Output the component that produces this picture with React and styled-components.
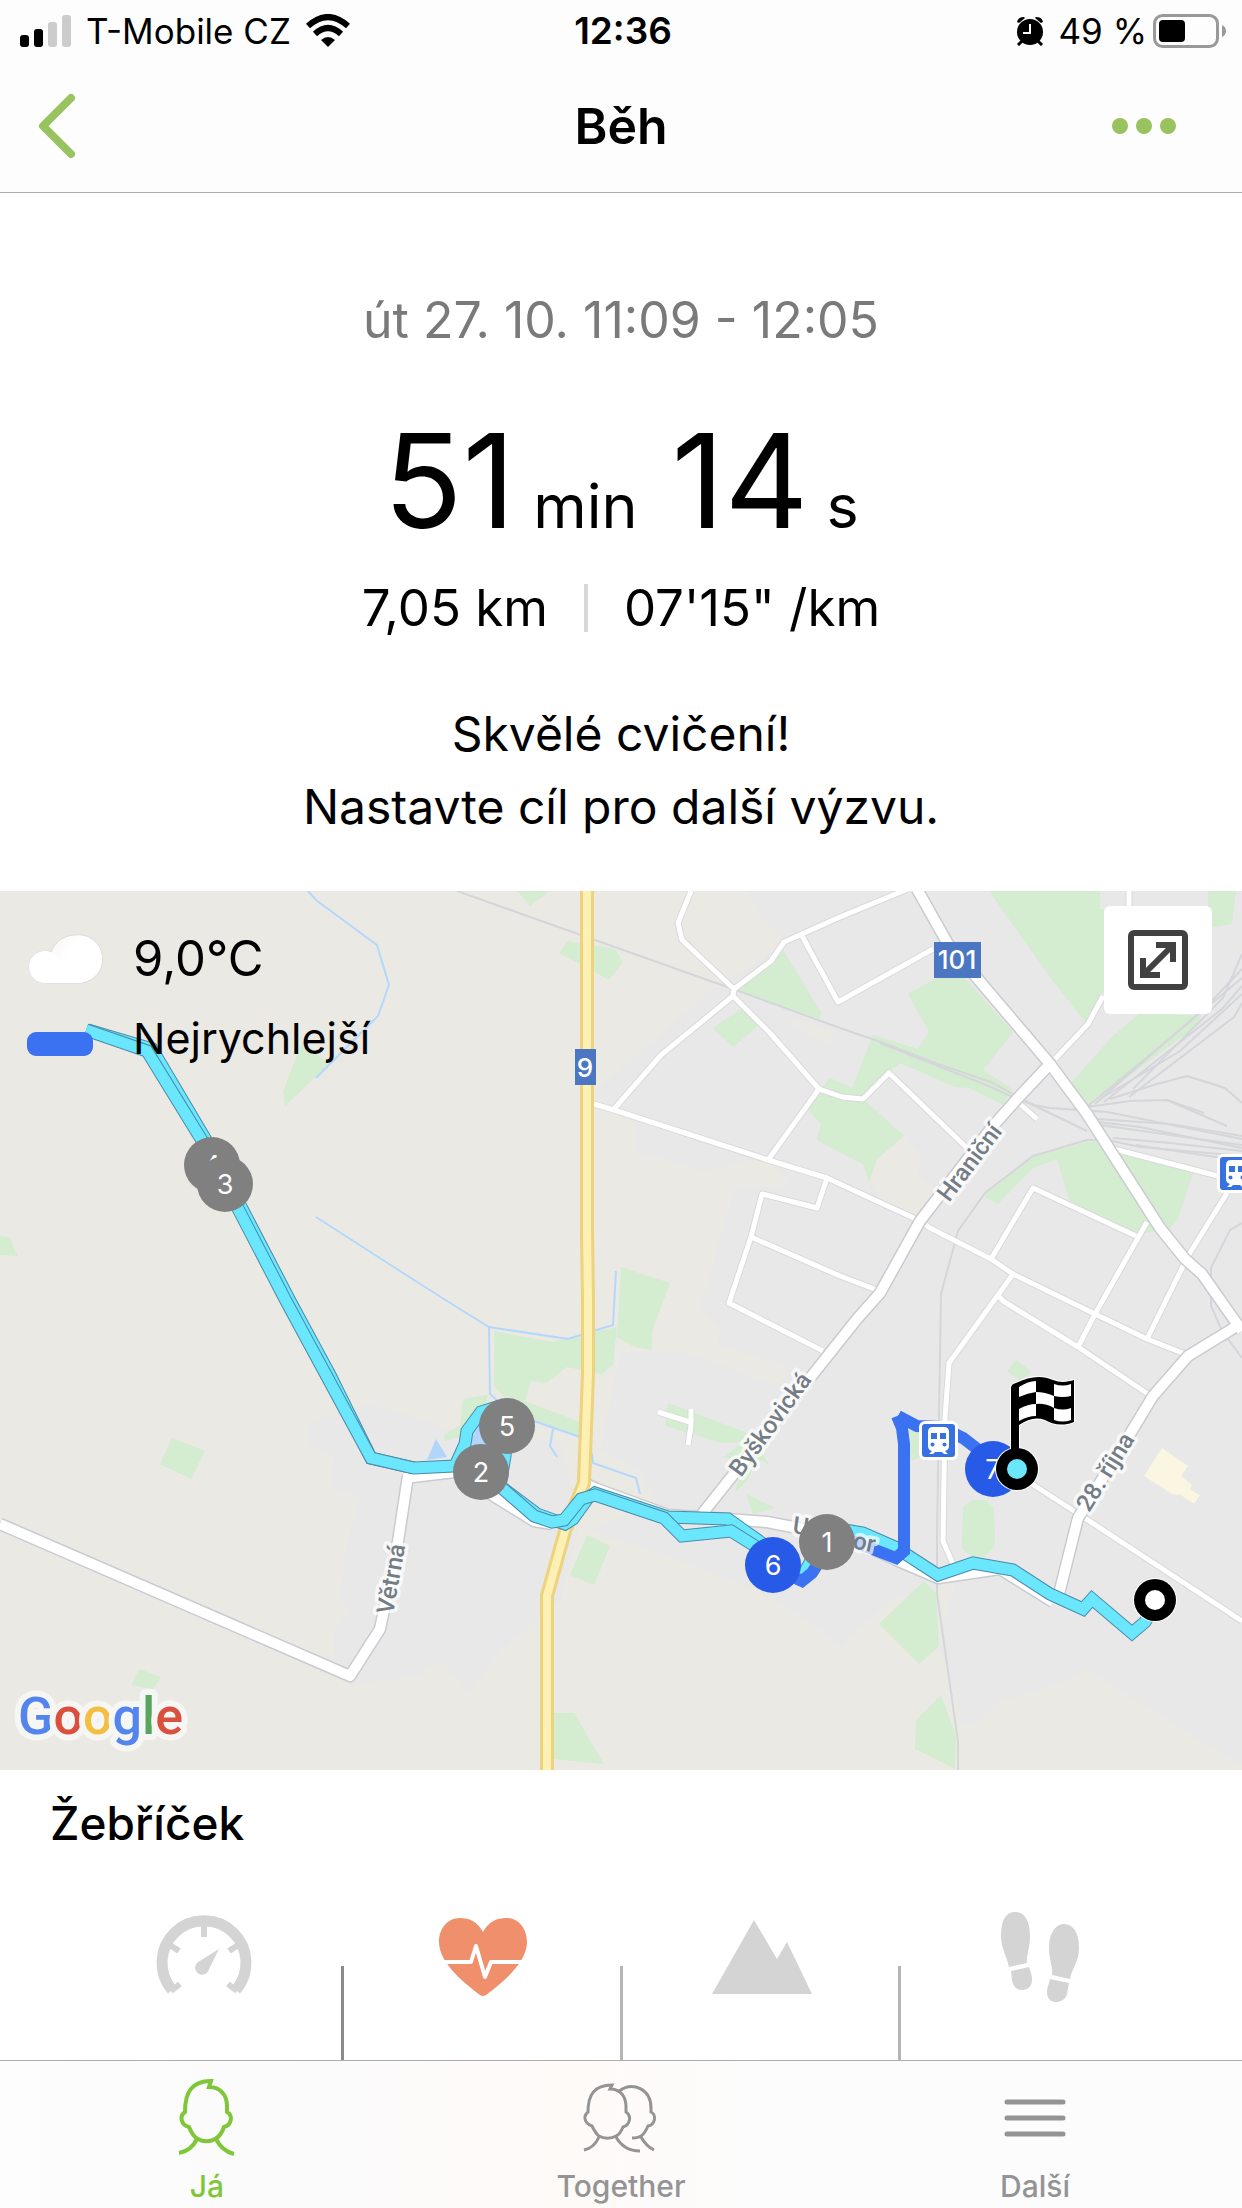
import React, { useState } from 'react';
import styled, { createGlobalStyle } from 'styled-components';

const GlobalStyle = createGlobalStyle`
  * {
    box-sizing: border-box;
  }

  body {
    margin: 0;
    background: #fff;
    color: #000;
    font-family: Inter, 'Liberation Sans', sans-serif;
  }

  button {
    padding: 0;
    border: 0;
    background: none;
    color: inherit;
    font: inherit;
    cursor: pointer;
  }

  svg {
    display: block;
  }
`;

const Screen = styled.div`
  display: flex;
  flex-direction: column;
  min-height: 100vh;
`;

const Top = styled.header`
  background: #fdfdfd;
  border-bottom: 1px solid #aeaeae;
`;

const StatusBar = styled.div`
  display: grid;
  grid-template-columns: 1fr auto 1fr;
  align-items: center;
  height: 64px;
  padding: 0 16px 2px 20px;
  font-size: 35px;
  line-height: 40px;

  .side {
    display: flex;
    align-items: center;
    gap: 14px;
  }

  .right {
    justify-content: flex-end;
  }

  .charge {
    display: flex;
    align-items: center;
    gap: 6px;
  }

  .time {
    font-size: 37px;
    font-weight: 600;
  }
`;

const NavBar = styled.nav`
  display: grid;
  grid-template-columns: 1fr auto 1fr;
  align-items: center;
  height: 128px;
  padding: 0 60px 4px 32px;

  h1 {
    margin: 0;
    padding-left: 28px;
    font-size: 50px;
    line-height: 60px;
    font-weight: 600;
  }
`;

const NavButton = styled.button`
  justify-self: ${(props) => (props.$end ? 'end' : 'start')};
  color: #98c35f;
`;

const Summary = styled.section`
  display: flex;
  flex-direction: column;
  align-items: center;
  padding: 97px 32px 48px;
  text-align: center;
`;

const When = styled.p`
  margin: 0;
  color: #7a7a7a;
  font-size: 50px;
  line-height: 60px;
`;

const Duration = styled.div`
  display: flex;
  align-items: baseline;
  margin-top: 56px;
  font-size: 130px;
  line-height: 150px;

  .unit {
    margin: 0 34px 0 18px;
    font-size: 61px;
  }

  .unit:last-child {
    margin-right: 0;
  }
`;

const Stats = styled.div`
  display: flex;
  align-items: center;
  gap: 36px;
  font-size: 51px;
  line-height: 54px;

  .separator {
    width: 4px;
    height: 48px;
    background: #d8d8d8;
  }
`;

const Cheer = styled.p`
  margin: 62px 0 0;
  font-size: 48px;
  line-height: 73px;
`;

const MapPanel = styled.section`
  position: relative;
  overflow: hidden;

  .map {
    width: 100%;
    height: auto;
  }
`;

const Legend = styled.div`
  position: absolute;
  top: 30px;
  left: 27px;
  display: grid;
  grid-template-columns: 76px auto;
  column-gap: 30px;
  row-gap: 5px;
  align-items: center;

  .temperature {
    font-size: 49px;
    line-height: 76px;
  }

  .label {
    font-size: 43px;
    line-height: 72px;
  }

  .pill {
    width: 66px;
    height: 24px;
    margin-top: 12px;
    border-radius: 9px;
    background: #3b72f2;
  }
`;

const ExpandButton = styled.button`
  position: absolute;
  top: 15px;
  right: 30px;
  display: flex;
  align-items: center;
  justify-content: center;
  width: 108px;
  height: 108px;
  border-radius: 6px;
  background: #fff;
`;

const Board = styled.section`
  flex: 1;
  display: flex;
  flex-direction: column;
  padding-top: 23px;

  h2 {
    margin: 0;
    padding: 0 50px;
    font-size: 46px;
    line-height: 60px;
    font-weight: 500;
  }
`;

const BoardTabs = styled.div`
  flex: 1;
  display: grid;
  grid-template-columns: repeat(4, 1fr);
  padding: 0 62px 0 65px;
  margin-top: 53px;
`;

const BoardTab = styled.button`
  display: flex;
  justify-content: center;
  align-items: flex-start;
  color: ${(props) => (props.$active ? '#ef8f6c' : '#d4d4d4')};
  background: linear-gradient(${(props) => props.$divider}, ${(props) => props.$divider})
    right bottom / 3px calc(100% - 60px) no-repeat;
`;

const TabBar = styled.nav`
  display: grid;
  grid-template-columns: repeat(3, 1fr);
  height: 148px;
  border-top: 1px solid #aeaeae;
  background: linear-gradient(90deg, #fdfdfd, #fbfbfc 20%, #fefaf8 46%, #fcfcfc 62%, #fcfcfc);
`;

const TabLink = styled.a`
  display: flex;
  flex-direction: column;
  align-items: center;
  padding-top: 15px;
  color: ${(props) => (props.$active ? '#7fc738' : '#949494')};
  font-size: 30px;
  line-height: 40px;
  font-weight: 500;
  text-decoration: none;

  span {
    margin-top: 6px;
  }
`;

const GREEN_AREAS = [
  '302,1041 329,1063 285,1105 283,1091',
  '0,1235 9,1236 18,1255 0,1254',
  '517,890 549,890 530,905',
  '559,952 568,940 615,948 623,961 609,979',
  '735,989 783,949 821,1011 820,1018',
  '713,1027 742,1007 759,1024 733,1046',
  '808,1108 821,1088 830,1077 852,1087 873,1034 918,1048 929,1031 908,993 935,978 960,972 1013,1031 983,1069 1012,1088 1003,1104 969,1087 955,1086 900,1062 889,1072 863,1098 904,1135 877,1158 869,1181 863,1163 820,1141 817,1138 821,1123',
  '989,890 1100,890 1100,908 1104,908 1104,990 1086,1022 1053,980',
  '1208,890 1236,890 1232,923 1208,927',
  '1070,1083 1113,1035 1140,1012 1202,1015 1190,1030 1087,1106',
  '983,1195 1033,1155 1087,1141 1107,1140 1115,1147 1193,1172 1178,1217 1169,1229 1135,1233 1070,1202 1057,1158 1033,1167 998,1203',
  '621,1266 670,1282 652,1330 652,1349 635,1346 617,1336 618,1320',
  '494,1330 552,1341 617,1326 613,1363 602,1373 567,1366 546,1382 531,1380 525,1400 580,1421 579,1436 534,1420 515,1405 505,1397 494,1385',
  '463,1398 488,1394 480,1430 445,1440 444,1434 460,1424',
  '668,1402 750,1433 745,1441 722,1442 665,1425',
  '724,1456 750,1436 770,1464 757,1458 747,1480 735,1492 742,1462',
  '746,1493 776,1507 753,1513',
  '587,1534 610,1545 594,1584 570,1574',
  '553,1712 574,1712 604,1763 553,1758',
  '909,1428 920,1430 923,1455 911,1460',
  '963,1506 972,1499 986,1499 994,1507 995,1545 984,1556 972,1556 962,1547',
  '924,1580 936,1592 939,1645 919,1663 879,1623',
  '941,1694 956,1735 955,1768 915,1748 916,1719',
  '1016,1359 1032,1371 1020,1379 1007,1370',
  '172,1437 205,1450 191,1478 160,1463',
  '139,1668 161,1676 153,1688 131,1684',
];

const BUILT_AREAS = [
  '747,890 760,913 787,940 735,975 710,990 600,1087 600,1105 638,1121 635,1150 705,1170 770,1155 790,1185 735,1185 700,1308 720,1325 718,1345 790,1365 780,1385 680,1350 620,1352 600,1450 640,1470 655,1500 590,1530 640,1545 760,1590 815,1625 840,1645 890,1600 955,1582 940,1640 962,1724 977,1724 1000,1700 1060,1683 1085,1668 1242,1765 1242,890',
  '370,1403 420,1418 450,1430 560,1440 580,1520 560,1600 500,1650 470,1692 440,1660 420,1675 350,1683 334,1660 334,1627 350,1610 340,1600 345,1550 360,1497 330,1485 335,1455 310,1445 307,1425 325,1416',
];

const BARE_AREAS = [
  '904,1135 920,1152 918,1172 932,1188 920,1218 885,1200 869,1181 877,1158',
  '783,1016 835,1030 829,1044 805,1032',
];

const STREAMS = [
  '308,890 316,899 377,944 389,984 378,1015 316,1077',
  '316,1216 400,1270 447,1300 489,1326 568,1338 613,1324 616,1270',
  '489,1326 490,1393 500,1402 534,1420 580,1436',
  '553,1428 550,1445 557,1456',
  '592,1452 593,1462 636,1477 640,1493',
];

const RAILS = [
  '457,890 733,988 840,1027 878,1040 938,1063 991,1081 1033,1104 1087,1130',
  '880,1042 991,1086 1015,1097 1034,1104 1050,1107 1107,1111 1242,1138',
  '1087,1106 1187,1023 1242,977',
  '1095,1103 1208,1004 1242,968',
  '1104,1101 1222,1008 1242,985',
  '1100,1098 1180,1050 1242,993',
  '1129,1096 1234,1016 1242,1002',
  '1133,1088 1223,997 1242,953',
  '1110,1098 1157,1083 1187,1075 1225,1087 1242,1102',
  '1087,1106 1130,1100 1167,1099 1227,1125',
  '1167,1099 1204,1112',
  '1097,1118 1170,1123 1242,1135',
  '1097,1121 1140,1126 1242,1147',
  '1100,1124 1220,1141 1242,1144',
  '1107,1139 1140,1146 1242,1155',
  '1113,1137 1170,1142 1242,1150',
  '1136,1144 1242,1160',
  '1107,1139 1087,1139 1033,1155 985,1192 958,1230 941,1293 937,1533 937,1593 958,1740 958,1769',
  '1242,1222 1230,1229 1211,1267 1211,1305 1222,1330 1242,1357',
];

const MINOR_ROADS = [
  '691,890 678,922 682,939 734,988 733,995 770,1032 819,1088 842,1096 863,1098 889,1072 967,1147',
  '734,988 771,960 784,941 840,916 908,888',
  '801,933 838,1001 933,948',
  '733,995 661,1054 614,1108',
  '594,1103 614,1109 768,1159 827,1177 920,1220 930,1227 991,1258 1013,1273 1095,1313 1147,1338 1185,1353',
  '819,1088 768,1159',
  '827,1177 817,1207 762,1193 751,1236 729,1302 823,1350',
  '751,1236 840,1275 877,1289',
  '991,1258 1033,1187 1136,1235',
  '1147,1221 1095,1313 1078,1346',
  '1013,1273 998,1294 949,1362 945,1417 943,1540 953,1563',
  '998,1294 1003,1300 1078,1346 1148,1393',
  '1227,1192 1188,1255 1147,1338',
  '1110,1147 1218,1175',
  '1055,1058 1088,1023 1103,995',
  '1020,1103 1037,1118',
  '1129,890 1129,905',
  '1032,1483 1074,1510 1242,1620',
  '658,1411 690,1421',
  '691,1408 691,1425 688,1444',
];

const MAJOR_ROADS = [
  '917,888 948,943 977,977 1050,1063 1087,1113 1160,1227 1185,1258 1202,1273 1242,1330',
  '1050,1063 1017,1098 993,1125 920,1220 880,1292 857,1318 822,1362 702,1513',
  '1242,1322 1188,1355 1153,1395 1127,1438 1078,1517 1058,1597',
  '584,1482 597,1488 668,1514 728,1518 767,1521 798,1527 850,1537 896,1559 938,1577 1000,1568 1053,1601',
  '0,1523 350,1675 380,1628 397,1547 408,1475',
  '404,1477 455,1471 534,1520 552,1523',
];

const ROUTE = [
  '88,1029 152,1048 210,1146 290,1300 330,1374 371,1457 414,1467',
  '507,1425 505,1455 500,1485 537,1513 565,1523 573,1518 588,1497 595,1492 668,1516 728,1518 773,1550',
  '86,1029 147,1050 206,1146 286,1300 371,1457 414,1467 455,1465 465,1443 467,1430 481,1411 500,1405',
  '495,1483 502,1487 534,1515 552,1521 564,1519 581,1498 595,1494 664,1517 682,1535 731,1530 755,1545 773,1564 803,1574 812,1558',
  '827,1526 863,1532 895,1546 938,1574 973,1562 1013,1569 1050,1593 1083,1608 1092,1598 1132,1632 1145,1621 1153,1608',
];

const FASTEST = [
  '793,1576 802,1580 812,1572 822,1556',
  '848,1538 870,1547 896,1557 904,1550 904,1443 902,1427 897,1415',
  '898,1415 917,1425 940,1426 963,1437 980,1450',
];

const STREETS = [
  { name: 'Hraniční', x: 949, y: 1202, angle: -53 },
  { name: 'Byškovická', x: 741, y: 1477, angle: -54 },
  { name: '28. října', x: 1089, y: 1512, angle: -58 },
  { name: 'Větrná', x: 393, y: 1614, angle: -80 },
  { name: 'U', x: 792, y: 1532, angle: 8 },
  { name: 'or', x: 852, y: 1547, angle: 12 },
];

const KILOMETRES = [
  { km: 4, x: 212, y: 1164 },
  { km: 3, x: 225, y: 1183 },
  { km: 5, x: 507, y: 1425 },
  { km: 2, x: 481, y: 1471 },
  { km: 6, x: 773, y: 1564, fast: true },
  { km: 1, x: 827, y: 1541 },
  { km: 7, x: 993, y: 1468, fast: true },
];

const Lines = ({ list, ...rest }) => (
  <g fill="none" {...rest}>
    {list.map((points) => (
      <polyline key={points} points={points} />
    ))}
  </g>
);

const Areas = ({ list, fill }) => (
  <g fill={fill}>
    {list.map((points) => (
      <polygon key={points} points={points} />
    ))}
  </g>
);

const Station = ({ x, y }) => (
  <g transform={`translate(${x} ${y})`}>
    <rect width="39" height="39" rx="6" fill="#fff" />
    <rect x="3" y="3" width="33" height="33" rx="3" fill="#3871e0" />
    <path
      d="M14 6h11q5 0 5 5v14q0 4-4 5l3 3h-4l-2-2h-7l-2 2h-4l3-3q-4-1-4-5V11q0-5 5-5z"
      fill="#fff"
    />
    <path d="M12 12h6v6h-6zM21 12h6v6h-6z" fill="#3871e0" />
    <circle cx="13.500" cy="23.500" r="2" fill="#3871e0" />
    <circle cx="25.500" cy="23.500" r="2" fill="#3871e0" />
  </g>
);

const Flag = () => (
  <g>
    <path
      d="M1011 1387Q1011 1383 1016 1382C1030 1375 1042 1374 1053 1379C1060 1382 1068 1381 1074 1379V1421C1062 1426 1052 1423 1045 1419C1036 1416 1028 1418 1019 1424V1450H1011Z"
      stroke="#fff"
      strokeWidth="2"
      paintOrder="stroke"
    />
    <g fill="#fff">
      <path d="M1019 1386Q1028 1380 1036 1380V1391Q1028 1392 1019 1396Z" />
      <path d="M1054 1383Q1063 1386 1071 1383V1395Q1063 1397 1054 1395Z" />
      <path d="M1036 1391Q1045 1391 1054 1395V1407Q1045 1402 1036 1403Z" />
      <path d="M1019 1408Q1028 1403 1036 1403V1415Q1028 1415 1019 1420Z" />
      <path d="M1054 1407Q1063 1410 1071 1407V1419Q1063 1422 1054 1419Z" />
    </g>
  </g>
);

const RouteMap = () => (
  <svg className="map" viewBox="0 890 1242 879" role="img" aria-label="Mapa trasy">
    <rect y="890" width="1242" height="879" fill="#ebe9e4" />
    <Areas list={BUILT_AREAS} fill="#e8e8e8" />
    <Areas list={GREEN_AREAS} fill="#d4ecd0" />
    <Areas list={BARE_AREAS} fill="#ebe9e4" />
    <polygon
      points="1162,1447 1188,1465 1181,1475 1192,1484 1190,1489 1200,1494 1194,1503 1181,1494 1172,1493 1144,1475"
      fill="#fbf6e1"
    />
    <Lines list={STREAMS} stroke="#b4d8fb" strokeWidth="2" />
    <path d="M436 1438L447 1456L427 1459ZM470 1445L473 1428L484 1420L490 1445Z" fill="#b2d5fb" />
    <Lines list={RAILS} stroke="#d5d6da" strokeWidth="2" />

    <Lines list={MINOR_ROADS} stroke="#d9d9db" strokeWidth="7" strokeLinejoin="round" />
    <Lines list={MINOR_ROADS} stroke="#fff" strokeWidth="5" strokeLinejoin="round" />
    <Lines list={MAJOR_ROADS} stroke="#c9cbd0" strokeWidth="13" strokeLinejoin="round" />
    <Lines list={MAJOR_ROADS} stroke="#fff" strokeWidth="10" strokeLinejoin="round" />
    <g fill="none">
      <path d="M587 890V1230L588 1300V1372L584 1482L565 1530L547 1595V1769" stroke="#efd27c" strokeWidth="14" />
      <path d="M587 890V1230L588 1300V1372L584 1482L565 1530L547 1595V1769" stroke="#fcf0b4" strokeWidth="8" />
    </g>

    {ROUTE.map((points) => (
      <g key={points} fill="none">
        <polyline points={points} stroke="#4a8aa9" strokeWidth="13" />
        <polyline points={points} stroke="#6ae6fd" strokeWidth="11" />
      </g>
    ))}
    <Lines list={FASTEST} stroke="#3b72f2" strokeWidth="12" />

    <g fontFamily="Roboto, sans-serif" fontSize="24" fontWeight="500" fill="#747d85">
      {STREETS.map(({ name, x, y, angle }) => (
        <text
          key={name}
          transform={`translate(${x} ${y}) rotate(${angle})`}
          stroke="#fff"
          strokeOpacity="0.7"
          strokeWidth="7"
          strokeLinejoin="round"
          paintOrder="stroke"
        >
          {name}
        </text>
      ))}
    </g>

    <g fontSize="26" fontWeight="500" textAnchor="middle" fill="#fff">
      <rect x="575" y="1048" width="21" height="36" fill="#4a76c2" />
      <text x="585" y="1076">9</text>
      <rect x="934" y="941" width="47" height="36" fill="#4a76c2" />
      <text x="957" y="968">101</text>
    </g>
    <Station x={919} y={1420} />
    <Station x={1217} y={1153} />

    <g fontSize="27" textAnchor="middle">
      {KILOMETRES.map(({ km, x, y, fast }) => (
        <g key={km}>
          <circle cx={x} cy={y} r="28" fill={fast ? '#275be7' : '#808080'} />
          <text x={x} y={y + 10} fill="#fff">
            {km}
          </text>
        </g>
      ))}
    </g>

    <circle cx="1017" cy="1468" r="22" fill="#fff" />
    <Flag />
    <circle cx="1017" cy="1468" r="21" />
    <circle cx="1017" cy="1468" r="10" fill="#6ae6fd" />
    <circle cx="1155" cy="1599" r="22" fill="#fff" />
    <circle cx="1155" cy="1599" r="21" />
    <circle cx="1155" cy="1599" r="10" fill="#fff" />

    <text
      x="18"
      y="1733"
      fontFamily="Roboto, sans-serif"
      fontSize="52"
      fontWeight="500"
      stroke="#f6f6f4"
      strokeWidth="12"
      strokeLinejoin="round"
      paintOrder="stroke"
    >
      <tspan fill="#5484ee">G</tspan>
      <tspan fill="#d9503f">o</tspan>
      <tspan fill="#f3bf42">o</tspan>
      <tspan fill="#5484ee">g</tspan>
      <tspan fill="#58a55c">l</tspan>
      <tspan fill="#d9503f">e</tspan>
    </text>
  </svg>
);

const Signal = () => (
  <svg width="52" height="32" aria-hidden="true">
    <rect y="20" width="9" height="12" rx="3" />
    <rect x="14" y="14" width="9" height="18" rx="3" />
    <rect x="28" y="7" width="9" height="25" rx="3" fill="#ccc" />
    <rect x="42" y="0" width="9" height="32" rx="3" fill="#ccc" />
  </svg>
);

const Wifi = () => (
  <svg width="46" height="34" viewBox="0 0 46 34" aria-hidden="true">
    <path d="M23 33L16 26Q23 20 30 26Z" />
    <g fill="none" stroke="#000" strokeWidth="6">
      <path d="M3 12Q23-6 43 12" />
      <path d="M10 20Q23 8 36 20" />
    </g>
  </svg>
);

const Alarm = () => (
  <svg width="28" height="30" viewBox="0 0 28 30" aria-hidden="true">
    <circle cx="14" cy="16" r="13" />
    <path d="M1 6Q2 1 8 1L9 2L3 7ZM27 6Q26 1 20 1L19 2L25 7Z" />
    <path d="M6 25L2 29M22 25L26 29" stroke="#000" strokeWidth="3" />
    <path d="M14 8V17H7" fill="none" stroke="#fff" strokeWidth="2" />
  </svg>
);

const Battery = () => (
  <svg width="73" height="34" viewBox="0 0 73 34" aria-hidden="true">
    <rect x="1.500" y="1.500" width="63" height="31" rx="8" fill="none" stroke="#999" strokeWidth="3" />
    <rect x="6" y="6" width="26" height="22" rx="4" />
    <path d="M69 11Q73 13 73 17T69 23Z" fill="#999" />
  </svg>
);

const Cloud = () => (
  <svg width="76" height="56" viewBox="0 0 76 56" aria-hidden="true">
    <defs>
      <linearGradient id="cloud" x1="0" y1="0" x2="1" y2="0.400">
        <stop offset="0.100" stopColor="#f4f2ec" />
        <stop offset="0.600" stopColor="#fff" />
      </linearGradient>
    </defs>
    <path
      d="M18 52A16 16 0 0 1 18 20Q21 20 24 21C28 11 37 4 48 4A24 24 0 0 1 55 52Z"
      fill="url(#cloud)"
      stroke="#dedcd7"
      strokeWidth="1"
    />
    <path d="M18 52A16 16 0 1 1 34 36L44 38L56 52Z" fill="#fff" />
  </svg>
);

const Gauge = () => (
  <svg width="100" height="100" viewBox="0 0 100 100" aria-hidden="true">
    <path
      d="M18 84A42 42 0 1 1 82 84"
      fill="none"
      stroke="currentColor"
      strokeWidth="11"
    />
    <path
      d="M50 17V31M16 39L25 45M84 39L75 45M17 85L26 78M83 85L74 78"
      stroke="currentColor"
      strokeWidth="6"
    />
    <path d="M65 43L55 63A7 7 0 1 1 44 56Z" fill="currentColor" />
  </svg>
);

const Heart = () => (
  <svg width="100" height="100" viewBox="0 0 100 100" aria-hidden="true">
    <path
      d="M50 26C44 15 36 12 27 12C14 12 6 23 6 36C6 58 34 79 47 89Q50 91 53 89C66 79 94 58 94 36C94 23 86 12 73 12C64 12 56 15 50 26Z"
      fill="currentColor"
    />
    <path d="M8 56H38L43 40L52 71L58 56H92" fill="none" stroke="#fff" strokeWidth="4" strokeLinejoin="round" />
  </svg>
);

const Mountain = () => (
  <svg width="100" height="100" viewBox="0 0 100 100" aria-hidden="true">
    <path d="M0 88L42 14L65 53L75 36L100 88Z" fill="currentColor" />
  </svg>
);

const Feet = () => (
  <svg width="100" height="100" viewBox="0 0 100 100" aria-hidden="true">
    <g fill="currentColor">
      <path d="M24 6C14 6 10 16 10 30C10 42 15 48 18 61L36 57C35 50 39 42 39 30C39 14 33 6 24 6Z" />
      <path d="M20 65L38 61C40 66 41 70 41 74C41 80 37 84 31 84C25 84 22 80 21 74Z" />
      <path d="M73 18C64 18 58 28 58 42C58 54 62 60 61 69L79 73C81 62 88 56 88 42C88 26 82 18 73 18Z" />
      <path d="M59 73L78 77L76 88C74 94 70 96 65 96C59 96 56 92 56 86C56 81 58 78 59 73Z" />
    </g>
  </svg>
);

const Person = () => (
  <svg width="72" height="84" viewBox="0 0 72 84" aria-hidden="true">
    <g fill="none" stroke="currentColor" strokeWidth="4">
      <path d="M40 5L38 11C50 11 56 20 56 30V36C62 39 61 49 53 51C51 57 48 61 44 63C39 66 32 66 27 63C23 61 20 56 18 51C10 49 8 40 14 36C14 17 20 5 40 5Z" />
      <path d="M26 63Q20 75 8 77M45 63Q51 75 63 78" />
    </g>
  </svg>
);

const People = () => (
  <svg width="80" height="84" viewBox="0 0 80 84" aria-hidden="true">
    <g fill="none" stroke="currentColor" strokeWidth="3">
      <path d="M31 9L29 13C40 13 45 21 45 31V36C51 40 49 49 42 51C40 56 38 59 35 60C30 63 23 63 18 60C15 58 13 54 11 50C3 47 2 40 7 36C7 19 13 9 31 9Z" />
      <path d="M18 61Q13 72 3 74M35 61Q43 75 59 75" />
      <path d="M38 15C52 5 70 13 70 32V36C76 39 74 49 67 50C63 59 60 62 51 62M60 61Q65 70 73 74" />
    </g>
  </svg>
);

const Menu = () => (
  <svg width="72" height="84" viewBox="0 0 72 84" aria-hidden="true">
    <path d="M8 26H64M8 42H64M8 58H64" stroke="currentColor" strokeWidth="5" strokeLinecap="round" />
  </svg>
);

const boards = [
  { id: 'speed', label: 'Rychlost', icon: Gauge, divider: '#8a8a8a' },
  { id: 'heart', label: 'Tep', icon: Heart, divider: '#b5b5b5' },
  { id: 'elevation', label: 'Převýšení', icon: Mountain, divider: '#b5b5b5' },
  { id: 'steps', label: 'Kroky', icon: Feet, divider: 'transparent' },
];

const tabs = [
  { id: 'me', label: 'Já', icon: Person },
  { id: 'together', label: 'Together', icon: People },
  { id: 'more', label: 'Další', icon: Menu },
];

const App = () => {
  const [board, setBoard] = useState('heart');

  return (
    <Screen>
      <GlobalStyle />
      <Top>
        <StatusBar>
          <div className="side">
            <Signal />
            <span>T-Mobile CZ</span>
            <Wifi />
          </div>
          <span className="time">12:36</span>
          <div className="side right">
            <Alarm />
            <div className="charge">
              <span>49 %</span>
              <Battery />
            </div>
          </div>
        </StatusBar>
        <NavBar>
          <NavButton type="button" aria-label="Zpět">
            <svg width="48" height="72" viewBox="0 0 48 72">
              <path
                d="M39 8L11 36L39 64"
                fill="none"
                stroke="currentColor"
                strokeWidth="8"
                strokeLinecap="round"
                strokeLinejoin="round"
              />
            </svg>
          </NavButton>
          <h1>Běh</h1>
          <NavButton type="button" aria-label="Více" $end>
            <svg width="72" height="24" viewBox="0 0 72 24" fill="currentColor">
              <circle cx="10" cy="12" r="8" />
              <circle cx="34" cy="12" r="8" />
              <circle cx="58" cy="12" r="8" />
            </svg>
          </NavButton>
        </NavBar>
      </Top>

      <Summary>
        <When>út 27. 10. 11:09 - 12:05</When>
        <Duration>
          <span>51</span>
          <span className="unit">min</span>
          <span>14</span>
          <span className="unit">s</span>
        </Duration>
        <Stats>
          <span>7,05 km</span>
          <span className="separator" />
          <span>07&apos;15&quot; /km</span>
        </Stats>
        <Cheer>
          Skvělé cvičení!
          <br />
          Nastavte cíl pro další výzvu.
        </Cheer>
      </Summary>

      <MapPanel>
        <RouteMap />
        <Legend>
          <Cloud />
          <span className="temperature">9,0°C</span>
          <span className="pill" />
          <span className="label">Nejrychlejší</span>
        </Legend>
        <ExpandButton type="button" aria-label="Zvětšit mapu">
          <svg width="60" height="60" viewBox="0 0 60 60" fill="none" stroke="#414141" strokeWidth="6">
            <rect x="3" y="3" width="54" height="54" rx="3" />
            <path d="M28 15H45V32M15 28V45H32M15 45L45 15" />
          </svg>
        </ExpandButton>
      </MapPanel>

      <Board>
        <h2>Žebříček</h2>
        <BoardTabs>
          {boards.map(({ id, label, icon: Icon, divider }) => (
            <BoardTab
              key={id}
              type="button"
              aria-label={label}
              $active={board === id}
              $divider={divider}
              onClick={() => setBoard(id)}
            >
              <Icon />
            </BoardTab>
          ))}
        </BoardTabs>
      </Board>

      <TabBar>
        {tabs.map(({ id, label, icon: Icon }) => (
          <TabLink key={id} href={`#${id}`} $active={id === 'me'}>
            <Icon />
            <span>{label}</span>
          </TabLink>
        ))}
      </TabBar>
    </Screen>
  );
};

export default App;
